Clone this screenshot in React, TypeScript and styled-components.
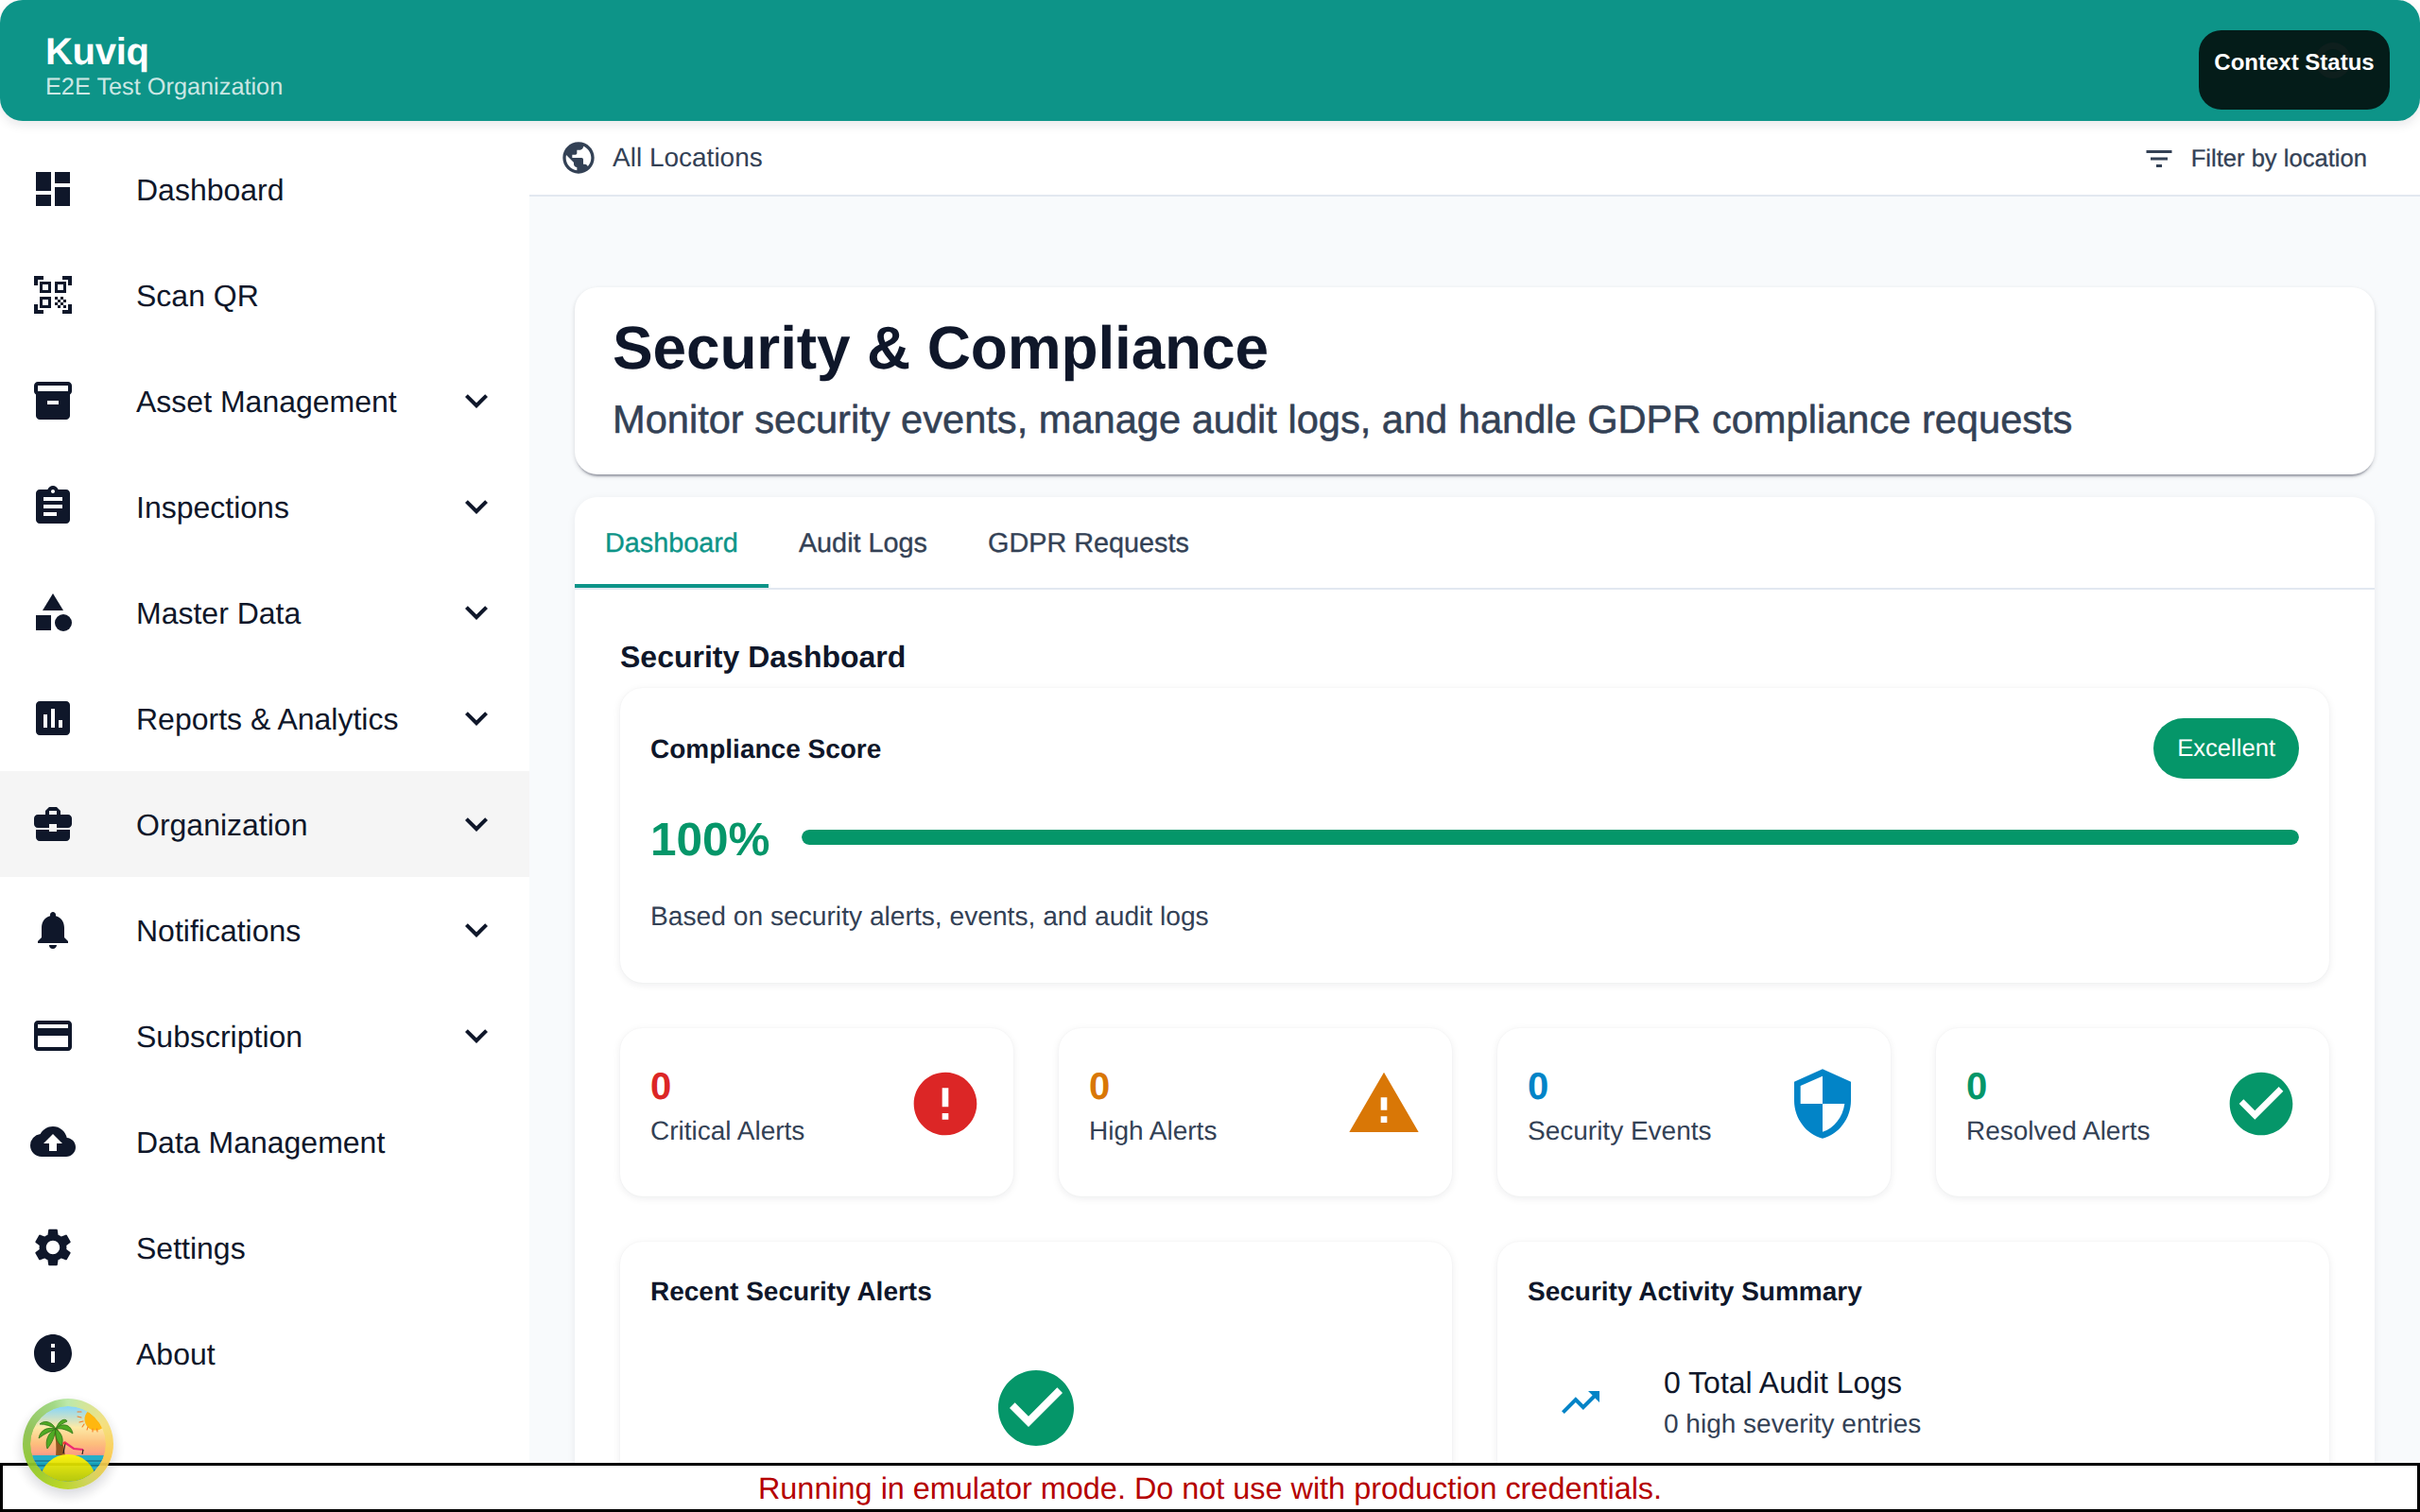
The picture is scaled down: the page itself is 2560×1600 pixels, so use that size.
import React from "react";
import styled, { createGlobalStyle } from "styled-components";
import {
  MdDashboard, MdQrCodeScanner, MdInventory2, MdAssignment, MdCategory, MdAssessment,
  MdBusinessCenter, MdNotifications, MdCreditCard, MdCloudUpload, MdSettings, MdInfo,
  MdExpandMore, MdPublic, MdFilterList, MdError, MdWarning, MdSecurity, MdCheckCircle, MdTrendingUp,
} from "react-icons/md";

const FONT = `"Liberation Sans", Arial, Helvetica, sans-serif`;
const INK = "#0f172a";
const SLATE = "#334155";
const TEAL = "#0d9488";
const GREEN = "#059669";

const Global = createGlobalStyle`
  html, body { margin: 0; padding: 0; height: 100%; background: #fff; overflow: hidden; }
  #root { height: 100%; }
  * { box-sizing: border-box; }
  body { font-family: ${FONT}; color: ${INK}; text-rendering: geometricPrecision; }
`;

const Shell = styled.div`
  height: 1600px;
  display: flex;
  flex-direction: column;
  overflow: hidden;
  position: relative;
`;

const Header = styled.header`
  height: 128px;
  flex: none;
  background: ${TEAL};
  border-radius: 24px;
  padding: 0 32px 0 48px;
  display: flex;
  align-items: flex-start;
  justify-content: space-between;
  box-shadow: 0 4px 12px rgba(15, 23, 42, 0.1);
  position: relative;
  z-index: 2;
`;

const Brand = styled.div`
  display: flex;
  flex-direction: column;
  padding-top: 31px;
`;

const BrandName = styled.div`
  color: #fff;
  font-size: 40px;
  line-height: 48px;
  font-weight: 700;
  letter-spacing: -0.3px;
`;

const BrandOrg = styled.div`
  color: rgba(255, 255, 255, 0.8);
  font-size: 25.3px;
  line-height: 32px;
  margin-top: -3px;
`;

const ContextButton = styled.button`
  position: relative;
  width: 202px;
  height: 84px;
  margin-top: 32px;
  border: 0;
  border-radius: 24px;
  background: #041c19;
  color: #fff;
  font-family: ${FONT};
  font-size: 24px;
  font-weight: 700;
  line-height: 36px;
  padding: 16px 16px 0;
  display: flex;
  justify-content: center;
  align-items: flex-start;
`;

const ContextLabel = styled.span`
  position: relative;
  z-index: 1;
  white-space: nowrap;
`;

const GhostRing = styled.span`
  position: absolute;
  left: 123px;
  top: 13px;
  width: 38px;
  height: 38px;
  border: 7px solid #0e1f1d;
  border-radius: 50%;
`;

const Body = styled.div`
  flex: 1;
  min-height: 0;
  display: flex;
`;

const Sidebar = styled.nav`
  width: 560px;
  flex: none;
  background: #fff;
  padding-top: 16px;
  display: flex;
  flex-direction: column;
`;

const NavItem = styled.div<{ $active?: boolean }>`
  height: 112px;
  flex: none;
  display: flex;
  align-items: center;
  padding: 0 32px;
  background: ${(p) => (p.$active ? "#f5f5f5" : "transparent")};
  color: ${INK};
`;

const NavIcon = styled.span`
  width: 112px;
  flex: none;
  display: flex;
  align-items: center;
  font-size: 48px;
  color: ${INK};
`;

const NavLabel = styled.span`
  flex: 1;
  font-size: 32px;
  line-height: 48px;
  padding-top: 2px;
`;

const NavChevron = styled.span`
  display: flex;
  font-size: 48px;
  color: ${INK};
`;

const Main = styled.main`
  flex: 1;
  min-width: 0;
  background: #f8fafc;
  display: flex;
  flex-direction: column;
  overflow: hidden;
`;

const LocationBar = styled.div`
  height: 80px;
  flex: none;
  background: #fff;
  border-bottom: 2px solid #e2e8f0;
  display: flex;
  align-items: center;
  justify-content: space-between;
  padding: 0 56px 0 32px;
  color: ${SLATE};
`;

const LocationCurrent = styled.div`
  display: flex;
  align-items: center;
  gap: 16px;
  font-size: 28px;
  line-height: 40px;
`;

const LocationIcon = styled.span`
  display: flex;
  font-size: 40px;
`;

const FilterButton = styled.div`
  display: flex;
  align-items: center;
  gap: 16px;
  font-size: 25.6px;
  line-height: 40px;
  padding-top: 2px;
  -webkit-text-stroke: 0.3px ${SLATE};
`;

const FilterIcon = styled.span`
  display: flex;
  font-size: 36px;
`;

const Content = styled.div`
  flex: 1;
  min-height: 0;
  padding: 96px 48px 0;
  display: flex;
  flex-direction: column;
  gap: 24px;
`;

const TitleCard = styled.section`
  flex: none;
  height: 198px;
  background: #fff;
  border-radius: 24px;
  padding: 28px 40px 0;
  box-shadow: 0 4px 2px -2px rgba(15, 23, 42, 0.32), 0 2px 4px rgba(15, 23, 42, 0.1), 0 2px 6px rgba(15, 23, 42, 0.06);
`;

const PageTitle = styled.h1`
  margin: 0;
  font-size: 64px;
  line-height: 72px;
  font-weight: 700;
  letter-spacing: -0.15px;
  color: ${INK};
`;

const PageSubtitle = styled.p`
  margin: 14px 0 0;
  font-size: 41.6px;
  line-height: 52px;
  color: ${SLATE};
  -webkit-text-stroke: 0.55px ${SLATE};
`;

const TabsCard = styled.section`
  flex: none;
  background: #fff;
  border-radius: 24px 24px 0 0;
  box-shadow: 0 2px 8px rgba(15, 23, 42, 0.07);
`;

const TabBar = styled.div`
  height: 98px;
  display: flex;
  border-bottom: 2px solid #e2e8f0;
`;

const Tab = styled.div<{ $active?: boolean }>`
  height: 96px;
  padding: 6px 32px 0;
  display: flex;
  align-items: center;
  font-size: 28.8px;
  color: ${(p) => (p.$active ? TEAL : SLATE)};
  border-bottom: 4px solid ${(p) => (p.$active ? TEAL : "transparent")};
  -webkit-text-stroke: 0.35px ${(p) => (p.$active ? TEAL : SLATE)};
`;

const Panel = styled.div`
  padding: 49px 48px 0;
`;

const PanelTitle = styled.h2`
  margin: 0;
  font-size: 32px;
  line-height: 44px;
  font-weight: 700;
  color: ${INK};
`;

const Card = styled.div`
  background: #fff;
  border-radius: 24px;
  box-shadow: 0 2px 8px rgba(15, 23, 42, 0.08), 0 0 2px rgba(15, 23, 42, 0.04);
`;

const ScoreCard = styled(Card)`
  margin-top: 11px;
  height: 312px;
  padding: 32px;
`;

const ScoreHead = styled.div`
  display: flex;
  align-items: center;
  justify-content: space-between;
  height: 64px;
`;

const CardTitle = styled.h3`
  margin: 0;
  font-size: 28px;
  line-height: 40px;
  font-weight: 700;
  color: ${INK};
`;

const ScoreTitle = styled(CardTitle)`
  padding-top: 2px;
`;

const LowerTitle = styled(CardTitle)`
  padding-top: 1px;
`;

const Chip = styled.span`
  height: 64px;
  padding: 0 25px;
  border-radius: 32px;
  background: ${GREEN};
  color: #fff;
  font-size: 25.6px;
  display: flex;
  align-items: center;
`;

const ScoreRow = styled.div`
  display: flex;
  align-items: flex-start;
  gap: 33px;
  margin-top: 31px;
`;

const ScoreValue = styled.span`
  font-size: 49.5px;
  line-height: 62px;
  font-weight: 700;
  color: ${GREEN};
  min-width: 126px;
  padding-top: 3px;
`;

const Track = styled.div`
  flex: 1;
  height: 16px;
  margin-top: 23px;
  background: #e2e8f0;
  border-radius: 8px;
  overflow: hidden;
`;

const TrackFill = styled.div`
  height: 100%;
  background: ${GREEN};
  border-radius: 8px;
`;

const ScoreNote = styled.p`
  margin: 29px 0 0;
  font-size: 28.2px;
  line-height: 40px;
  color: ${SLATE};
`;

const StatGrid = styled.div`
  display: grid;
  grid-template-columns: repeat(4, 1fr);
  gap: 48px;
  margin-top: 48px;
`;

const StatCard = styled(Card)`
  height: 178px;
  padding: 32px;
  display: flex;
  justify-content: space-between;
  align-items: flex-start;
`;

const StatBody = styled.div`
  display: flex;
  flex-direction: column;
  padding-top: 2px;
`;

const StatValue = styled.div<{ $color: string }>`
  font-size: 40px;
  line-height: 56px;
  font-weight: 700;
  color: ${(p) => p.$color};
`;

const StatLabel = styled.div`
  font-size: 28px;
  line-height: 38px;
  color: ${SLATE};
`;

const StatIcon = styled.span<{ $color: string }>`
  display: flex;
  font-size: 80px;
  margin-top: 8px;
  color: ${(p) => p.$color};
`;

const LowerGrid = styled.div`
  display: grid;
  grid-template-columns: repeat(2, 1fr);
  gap: 48px;
  margin-top: 48px;
`;

const LowerCard = styled(Card)`
  height: 400px;
  padding: 32px;
`;

const EmptyState = styled.div`
  display: flex;
  justify-content: center;
  margin-top: 55px;
  font-size: 96px;
  color: ${GREEN};
`;

const SummaryRow = styled.div`
  display: flex;
  align-items: center;
  padding: 32px 32px 0;
  margin-top: 21px;
`;

const SummaryIcon = styled.span`
  width: 112px;
  flex: none;
  display: flex;
  font-size: 48px;
  color: #0284c7;
`;

const SummaryTitle = styled.div`
  font-size: 32px;
  line-height: 46px;
  color: ${INK};
`;

const SummaryNote = styled.div`
  font-size: 28px;
  line-height: 40px;
  margin-top: 1px;
  color: ${SLATE};
`;

const EmulatorBanner = styled.p`
  position: fixed;
  left: 0;
  right: 0;
  bottom: 0;
  height: 52px;
  margin: 0;
  background: #fff;
  border: 3px solid #000;
  color: #b50000;
  font-family: ${FONT};
  font-size: 32.4px;
  line-height: 48px;
  text-align: center;
  z-index: 5;
`;

const AvatarRing = styled.div`
  position: fixed;
  left: 24px;
  top: 1480px;
  width: 96px;
  height: 96px;
  padding: 8px;
  border-radius: 50%;
  background: conic-gradient(from 0deg, #b9e8a6, #f4df7a 60deg, #fbc84a 110deg, #cfd257 150deg, #b6d41a 190deg, #8fc62a 240deg, #8cc152 290deg, #9ed780 340deg, #b9e8a6);
  box-shadow: 0 6px 14px rgba(15, 23, 42, 0.18);
  z-index: 6;
  opacity: 0.94;
`;

const navItems: { label: string; Icon: React.ComponentType; sub?: boolean; active?: boolean }[] = [
  { label: "Dashboard", Icon: MdDashboard },
  { label: "Scan QR", Icon: MdQrCodeScanner },
  { label: "Asset Management", Icon: MdInventory2, sub: true },
  { label: "Inspections", Icon: MdAssignment, sub: true },
  { label: "Master Data", Icon: MdCategory, sub: true },
  { label: "Reports & Analytics", Icon: MdAssessment, sub: true },
  { label: "Organization", Icon: MdBusinessCenter, sub: true, active: true },
  { label: "Notifications", Icon: MdNotifications, sub: true },
  { label: "Subscription", Icon: MdCreditCard, sub: true },
  { label: "Data Management", Icon: MdCloudUpload },
  { label: "Settings", Icon: MdSettings },
  { label: "About", Icon: MdInfo },
];

const stats = [
  { label: "Critical Alerts", color: "#dc2626", Icon: MdError },
  { label: "High Alerts", color: "#d97706", Icon: MdWarning },
  { label: "Security Events", color: "#0284c7", Icon: MdSecurity },
  { label: "Resolved Alerts", color: GREEN, Icon: MdCheckCircle },
];

function BeachArt() {
  return (
    <svg width="80" height="80" viewBox="0 0 80 80" style={{ display: "block", borderRadius: "50%" }}>
      <defs>
        <linearGradient id="sky" x1="0" y1="0" x2="0" y2="1">
          <stop offset="0" stopColor="#7dd3fc" />
          <stop offset="0.28" stopColor="#fde9a0" />
          <stop offset="0.5" stopColor="#fdba74" />
          <stop offset="0.68" stopColor="#fb8f82" />
        </linearGradient>
        <linearGradient id="isle" x1="0" y1="0" x2="0" y2="1">
          <stop offset="0" stopColor="#fdf200" />
          <stop offset="0.5" stopColor="#b5c800" />
          <stop offset="1" stopColor="#3f8a00" />
        </linearGradient>
        <clipPath id="disc"><circle cx="40" cy="40" r="40" /></clipPath>
      </defs>
      <g clipPath="url(#disc)">
        <rect width="80" height="80" fill="url(#sky)" />
        <circle cx="69" cy="14" r="11.5" fill="#ffb300" />
        <g stroke="#f97316" strokeWidth="1.1" strokeLinecap="round" fill="none">
          <path d="M50 6h4M50 11l4 1M52 17l4-1M55 22l2-3M60 25l1-3M66 27v-3M71 27l-.5-3" />
        </g>
        <path d="M27 53 C28 43 27 33 25 25 L29 24 C33 33 36 43 37 53 Z" fill="#8a4b12" />
        <g fill="#46a517" stroke="#1f6b08" strokeWidth="0.8">
          <path d="M27 24 C22 15 14 15 10 19 C16 19 22 21 27 24 Z" />
          <path d="M27 24 C19 22 11 24 9 34 C15 29 21 27 27 24 Z" />
          <path d="M27 24 C20 27 15 36 18 45 C23 39 26 32 27 24 Z" />
          <path d="M27 24 C26 31 28 38 33 42 C36 35 33 28 27 24 Z" />
          <path d="M27 24 C31 13 38 13 39 16 C35 18 31 20 27 24 Z" />
          <path d="M27 24 C34 17 43 19 45 29 C39 25 33 23 27 24 Z" />
        </g>
        <path d="M36 38 L46 45 L56 46" fill="none" stroke="#ec1c6b" strokeWidth="2.2" />
        <path d="M35 50 L37 39 M55 51 L56 46" stroke="#111" strokeWidth="1.2" />
        <circle cx="36" cy="39" r="1.6" fill="#ef2b2b" />
        <rect y="52" width="80" height="28" fill="#17a9c4" />
        <path d="M0 58 H80 M0 63 H80 M0 68 H80" stroke="#0f6f8c" strokeWidth="1.6" />
        <ellipse cx="40" cy="78" rx="29" ry="27" fill="url(#isle)" />
      </g>
    </svg>
  );
}

export default function App() {
  return (
    <>
      <Global />
      <Shell>
        <Header>
          <Brand>
            <BrandName>Kuviq</BrandName>
            <BrandOrg>E2E Test Organization</BrandOrg>
          </Brand>
          <ContextButton>
            <GhostRing />
            <ContextLabel>Context Status</ContextLabel>
          </ContextButton>
        </Header>
        <Body>
          <Sidebar>
            {navItems.map(({ label, Icon, sub, active }) => (
              <NavItem key={label} $active={active}>
                <NavIcon><Icon /></NavIcon>
                <NavLabel>{label}</NavLabel>
                {sub && <NavChevron><MdExpandMore /></NavChevron>}
              </NavItem>
            ))}
          </Sidebar>
          <Main>
            <LocationBar>
              <LocationCurrent>
                <LocationIcon><MdPublic /></LocationIcon>
                All Locations
              </LocationCurrent>
              <FilterButton>
                <FilterIcon><MdFilterList /></FilterIcon>
                Filter by location
              </FilterButton>
            </LocationBar>
            <Content>
              <TitleCard>
                <PageTitle>Security &amp; Compliance</PageTitle>
                <PageSubtitle>Monitor security events, manage audit logs, and handle GDPR compliance requests</PageSubtitle>
              </TitleCard>
              <TabsCard>
                <TabBar>
                  <Tab $active>Dashboard</Tab>
                  <Tab>Audit Logs</Tab>
                  <Tab>GDPR Requests</Tab>
                </TabBar>
                <Panel>
                  <PanelTitle>Security Dashboard</PanelTitle>
                  <ScoreCard>
                    <ScoreHead>
                      <ScoreTitle>Compliance Score</ScoreTitle>
                      <Chip>Excellent</Chip>
                    </ScoreHead>
                    <ScoreRow>
                      <ScoreValue>100%</ScoreValue>
                      <Track><TrackFill style={{ width: "100%" }} /></Track>
                    </ScoreRow>
                    <ScoreNote>Based on security alerts, events, and audit logs</ScoreNote>
                  </ScoreCard>
                  <StatGrid>
                    {stats.map(({ label, color, Icon }) => (
                      <StatCard key={label}>
                        <StatBody>
                          <StatValue $color={color}>0</StatValue>
                          <StatLabel>{label}</StatLabel>
                        </StatBody>
                        <StatIcon $color={color}><Icon /></StatIcon>
                      </StatCard>
                    ))}
                  </StatGrid>
                  <LowerGrid>
                    <LowerCard>
                      <LowerTitle>Recent Security Alerts</LowerTitle>
                      <EmptyState><MdCheckCircle /></EmptyState>
                    </LowerCard>
                    <LowerCard>
                      <LowerTitle>Security Activity Summary</LowerTitle>
                      <SummaryRow>
                        <SummaryIcon><MdTrendingUp /></SummaryIcon>
                        <div>
                          <SummaryTitle>0 Total Audit Logs</SummaryTitle>
                          <SummaryNote>0 high severity entries</SummaryNote>
                        </div>
                      </SummaryRow>
                    </LowerCard>
                  </LowerGrid>
                </Panel>
              </TabsCard>
            </Content>
          </Main>
        </Body>
        <EmulatorBanner>Running in emulator mode. Do not use with production credentials.</EmulatorBanner>
        <AvatarRing><BeachArt /></AvatarRing>
      </Shell>
    </>
  );
}
